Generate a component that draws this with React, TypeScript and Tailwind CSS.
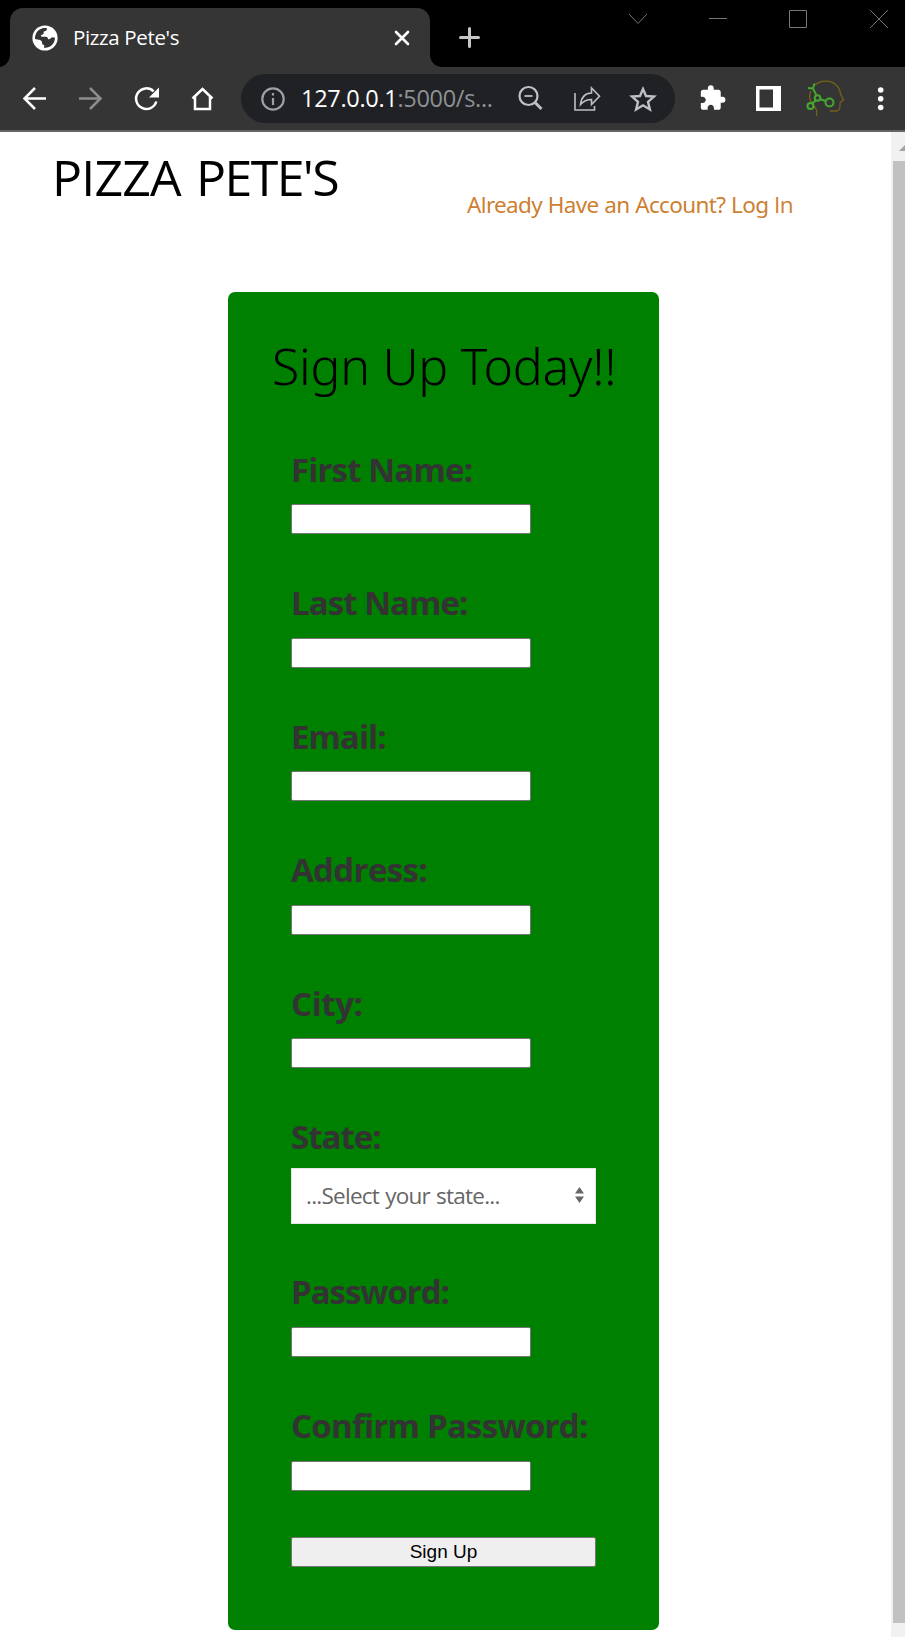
import React from "react";

type FieldProps = { label: string; spacing: string };

function Field({ label, spacing }: FieldProps) {
  return (
    <label className="flex h-[133.6px] flex-col items-start">
      <span className={`block h-[60px] whitespace-nowrap pt-[2.500px] text-[33px] font-bold leading-[46px] text-[#333333] ${spacing}`}>{label}</span>
      <input className="h-[30px] w-[240px] rounded-[2px] border border-[#767676] bg-white px-1 text-xl outline-none" />
    </label>
  );
}

function WindowControls() {
  return (
    <svg className="ml-auto h-[38px] w-[280px] shrink-0" viewBox="0 0 280 38" fill="none" stroke="#777" strokeWidth="1">
      <path d="M4 14l9 9.500 9-9.500M84 18.500h18M164.500 10.500h17v17h-17zM245 10l18 18M263 10l-18 18" />
    </svg>
  );
}

function TabStrip() {
  return (
    <div className="flex h-[67px] items-start bg-black">
      <svg className="mt-[54px] h-[13px] w-[10px] shrink-0" viewBox="0 0 10 13">
        <path d="M10 0v13H0C6 12 10 7 10 0z" fill="#353535" />
      </svg>
      <div className="mt-2 flex h-[59px] w-[420px] shrink-0 items-center rounded-t-[13px] bg-[#353535] pl-[22px] pr-[20px]">
        <svg className="mt-[1px] h-[26px] w-[26px]" viewBox="0 0 26 26">
          <circle cx="13" cy="13" r="12.600" fill="#fff" />
          <path d="M3 14c0-5 2-9 7-10.500 1.500-.5 3.500-.5 5-.2 0 2-1 3-2.500 3-1 .2-1 1-.8 2-.2 1.200-1.300 1.300-2.500 1.700-.7.600-.2 1.700.8 1.700h4c1.400 0 2 1 2 2.300 1 .7 2.200-.2 3-1 1-1 2-.8 4-.2-.2 5-3 8.500-7.800 9.800l-3 .3v-3c-1.700 0-2.200-1-2.200-2.400 0-1.500-.8-2-2-2.500z" fill="#353535" />
        </svg>
        <span className="-mt-[2px] ml-[15px] text-[20.5px] leading-7 tracking-[-0.35px] text-white">Pizza Pete's</span>
        <svg className="ml-auto h-4 w-4" viewBox="0 0 16 16" stroke="#fff" strokeWidth="2.600" strokeLinecap="round">
          <path d="M2 2l12 12M14 2L2 14" />
        </svg>
      </div>
      <svg className="mt-[54px] h-[13px] w-[13px] shrink-0" viewBox="0 0 13 13">
        <path d="M0 0v13h13C5 13 0 8 0 0z" fill="#353535" />
      </svg>
      <svg className="ml-[15px] mt-[26px] h-[23px] w-[23px] shrink-0" viewBox="0 0 23 23" stroke="#c4c6c8" strokeWidth="3" strokeLinecap="round">
        <path d="M11.500 2.500v18M2.500 11.500h18" />
      </svg>
      <WindowControls />
    </div>
  );
}

function Toolbar() {
  return (
    <div className="flex h-[65px] items-center border-b-2 border-[#656565] bg-[#353535]">
      <svg className="h-[63px] w-[241px] shrink-0" viewBox="0 0 241 63" fill="none" stroke="#fff" strokeWidth="2.500">
        <path d="M46 31.500H25M35 21L24.500 31.500 35 42" />
        <path d="M79 31.500h21M90 21l10.500 10.500L90 42" stroke="#8d8d8d" />
        <path d="M156.300 34.500a10.300 10.300 0 1 1-2.700-10.200" />
        <path d="M159 20.500v10h-10z" fill="#fff" stroke="none" />
        <path d="M192.500 31.500L202.500 22l10 9.500M195 30v12h15V30" />
      </svg>
      <div className="flex h-[49px] w-[434px] shrink-0 items-center rounded-full bg-[#202125] pl-5">
        <svg className="h-6 w-6 shrink-0" viewBox="0 0 24 24" fill="none" stroke="#9da0a5" strokeWidth="2.200">
          <circle cx="12" cy="12" r="10.700" />
          <path d="M12 11v7M12 6v2.600" />
        </svg>
        <div className="-mt-[2px] ml-[16px] w-[200px] shrink-0 whitespace-nowrap text-[23.5px] leading-8 tracking-[-0.3px] text-[#8f9194]">
          <span className="text-white">127.0.0.1</span>:5000/s...
        </div>
        <svg className="h-[49px] w-[160px] shrink-0" viewBox="0 0 160 49" fill="none" stroke="#bdc0c5" strokeWidth="2.200">
          <circle cx="27.500" cy="22" r="9" />
          <path d="M23.500 22h8" strokeWidth="1.800" />
          <path d="M33.500 28l7 7" strokeWidth="3" />
          <path d="M74 19v17h19.500v-4" strokeWidth="1.600" />
          <path d="M79.500 30.500c1-8 5-11.500 11-11.500v-5l8 8.200-8 8.300v-5c-5 0-8 1.500-11 5z" strokeWidth="1.600" />
          <path d="M142 15l3 7 8 .6-6 5.300 1.900 7.600-6.900-4.200-6.900 4.200 1.900-7.600-6-5.300 8-.6z" strokeWidth="2.400" />
        </svg>
      </div>
      <svg className="h-[63px] w-[230px] shrink-0" viewBox="0 0 230 63" fill="none">
        <path transform="translate(23.500 17) scale(1.170)" d="M20.500 11H19V7c0-1.100-.9-2-2-2h-4V3.500a2.500 2.500 0 0 0-5 0V5H4c-1.100 0-1.990.9-1.990 2v3.800H3.500c1.490 0 2.700 1.210 2.700 2.700s-1.210 2.700-2.700 2.700H2V20c0 1.100.9 2 2 2h3.800v-1.500c0-1.490 1.210-2.700 2.700-2.700s2.700 1.210 2.700 2.700V22H17c1.100 0 2-.9 2-2v-4h1.500a2.500 2.500 0 0 0 0-5z" fill="#fff" />
        <path fillRule="evenodd" d="M81 19h25v25H81zM84.500 22.500v18H98v-18z" fill="#fff" />
        <g strokeWidth="1.300" stroke="#756119">
          <path d="M140 18c6-5 15-5 20-1 3 2 5 6 5.500 10l3 6-3.500 2.500v3c0 4-1 5.500-4 5.500h-6M136 24c-3 5-1 10 2 14 5 5 4 7 3.500 11" />
        </g>
        <g stroke="#46a82d" strokeWidth="2">
          <circle cx="142.500" cy="31" r="2.800" />
          <circle cx="154.500" cy="35.500" r="4" />
          <circle cx="135.500" cy="39" r="3" />
          <path d="M145 32l5.500 2M140.500 33.500l-3 3M141.500 28.500l-3.500-7 1.500-5M138 21.500l-5-.5" />
        </g>
        <g fill="#fff"><circle cx="205.700" cy="23" r="2.800" /><circle cx="205.700" cy="31.700" r="2.800" /><circle cx="205.700" cy="40.500" r="2.800" /></g>
      </svg>
    </div>
  );
}

export default function App() {
  return (
    <div className="flex h-[1637px] w-[905px] flex-col overflow-hidden bg-white font-['Open_Sans',sans-serif]">
      <TabStrip />
      <Toolbar />
      <div className="flex min-h-0 flex-1">
        <main className="w-[891px] shrink-0">
          <header className="flex h-[160px] items-start pl-[52px]">
            <h1 className="mt-[10px] w-[415px] whitespace-nowrap text-[50px] leading-[70px] tracking-[-0.8px] text-black">
              PIZZA <span className="ml-[3px] tracking-[-1.600px]">PETE'S</span>
            </h1>
            <a className="mt-[57px] whitespace-nowrap font-['Noto_Sans',sans-serif] text-[22.5px] leading-8 tracking-[-0.65px] text-[#cd7f32] [word-spacing:0.5px]">
              Already Have an Account? Log <span className="font-['Open_Sans',sans-serif]">In</span>
            </a>
          </header>
          <form className="ml-[228px] flex h-[1338px] w-[431px] flex-col rounded-[7px] bg-[#008000] px-[63px] pt-[39px]">
            <h2 className="-mx-[20px] h-[113px] whitespace-nowrap pl-px font-['Noto_Sans',sans-serif] text-[50px] font-[350] leading-[70px] tracking-[-0.25px] text-black">Sign Up Today!!</h2>
            <Field label="First Name:" spacing="tracking-[-0.85px]" />
            <Field label="Last Name:" spacing="tracking-[-0.95px]" />
            <Field label="Email:" spacing="tracking-[-0.95px]" />
            <Field label="Address:" spacing="tracking-[-0.65px]" />
            <Field label="City:" spacing="tracking-[-0.4px]" />
            <div className="h-[155px]">
              <div className="h-[56px] pt-[2px] text-[33px] font-bold leading-[46px] tracking-[-1px] text-[#333333]">State:</div>
              <div className="flex h-[56px] w-[305px] items-center border border-[#e5e5e5] bg-white pl-[15px] pr-[11px] text-[22.5px] text-[#666666]">
                <span className="-ml-px whitespace-nowrap tracking-[-0.75px] [word-spacing:1px]">...Select your state...</span>
                <svg className="-mt-[2px] ml-auto h-4 w-[9px]" viewBox="0 0 9 16" fill="#666"><path d="M0 6.500L4.500 0 9 6.500zM0 9.500h9L4.500 16z" /></svg>
              </div>
            </div>
            <Field label="Password:" spacing="tracking-[-1.050px]" />
            <Field label="Confirm Password:" spacing="tracking-[-0.75px]" />
            <button type="button" className="mt-[3px] h-[30px] w-[305px] shrink-0 rounded-[2px] border border-[#767676] bg-[#efefef] pb-[2px] font-['Liberation_Sans',sans-serif] text-[19px] leading-none text-black">Sign Up</button>
          </form>
        </main>
        <aside className="flex flex-1 flex-col bg-[#f1f1f1] pl-[2px]">
          <svg className="h-[29px] w-3 shrink-0" viewBox="0 0 12 29"><path d="M6 19l6-6v6z" fill="#a3a3a3" /></svg>
          <div className="h-[1462px] bg-[#c1c1c1]" />
        </aside>
      </div>
    </div>
  );
}
